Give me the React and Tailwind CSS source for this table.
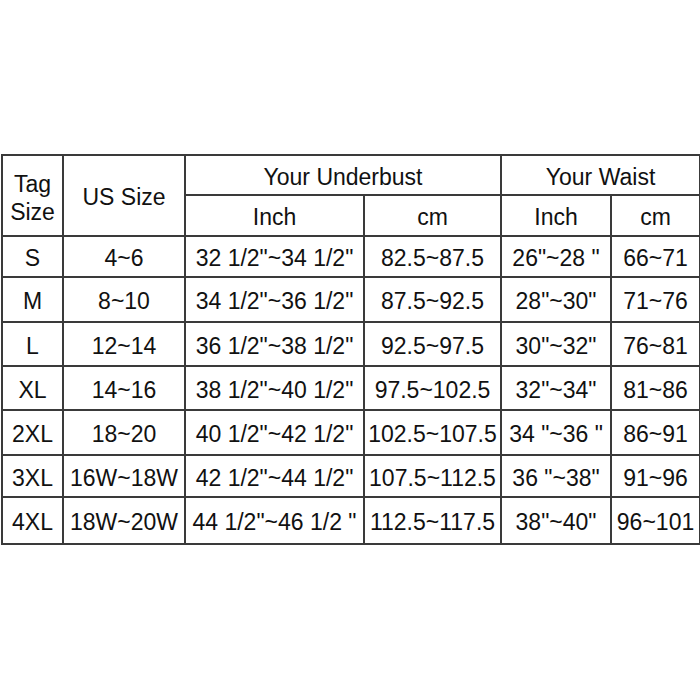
export default function App() {
  const rows = [
    ["S", "4~6", "32 1/2\"~34 1/2\"", "82.5~87.5", "26\"~28 \"", "66~71", 41],
    ["M", "8~10", "34 1/2\"~36 1/2\"", "87.5~92.5", "28\"~30\"", "71~76", 45],
    ["L", "12~14", "36 1/2\"~38 1/2\"", "92.5~97.5", "30\"~32\"", "76~81", 44],
    ["XL", "14~16", "38 1/2\"~40 1/2\"", "97.5~102.5", "32\"~34\"", "81~86", 44],
    ["2XL", "18~20", "40 1/2\"~42 1/2\"", "102.5~107.5", "34 \"~36 \"", "86~91", 45],
    ["3XL", "16W~18W", "42 1/2\"~44 1/2\"", "107.5~112.5", "36 \"~38\"", "91~96", 42],
    ["4XL", "18W~20W", "44 1/2\"~46 1/2 \"", "112.5~117.5", "38\"~40\"", "96~101", 47],
  ];
  const td = "border-2 border-[#3a3a3a] text-center align-middle px-0 pb-0 pt-[4px] whitespace-nowrap";
  return (
    <div className="w-[700px] h-[700px] bg-white pt-[154px] pl-[1px] font-['Liberation_Sans',Arial,sans-serif] text-[23px] text-[#111] leading-none">
      <table className="border-collapse table-fixed w-[698px]">
        <colgroup>
          <col className="w-[61px]" />
          <col className="w-[122px]" />
          <col className="w-[179px]" />
          <col className="w-[137px]" />
          <col className="w-[110px]" />
          <col className="w-[89px]" />
        </colgroup>
        <tbody>
          <tr className="h-[40px]">
            <td rowSpan={2} className={td + " leading-[28px]"}>Tag<br />Size</td>
            <td rowSpan={2} className={td}>US Size</td>
            <td colSpan={2} className={td}>Your Underbust</td>
            <td colSpan={2} className={td}>Your Waist</td>
          </tr>
          <tr className="h-[41px]">
            <td className={td}>Inch</td>
            <td className={td}>cm</td>
            <td className={td}>Inch</td>
            <td className={td}>cm</td>
          </tr>
          {rows.map((r) => (
            <tr key={r[0]} style={{ height: r[6] }}>
              {r.slice(0, 6).map((c, i) => (
                <td key={i} className={td}>{c}</td>
              ))}
            </tr>
          ))}
        </tbody>
      </table>
    </div>
  );
}
